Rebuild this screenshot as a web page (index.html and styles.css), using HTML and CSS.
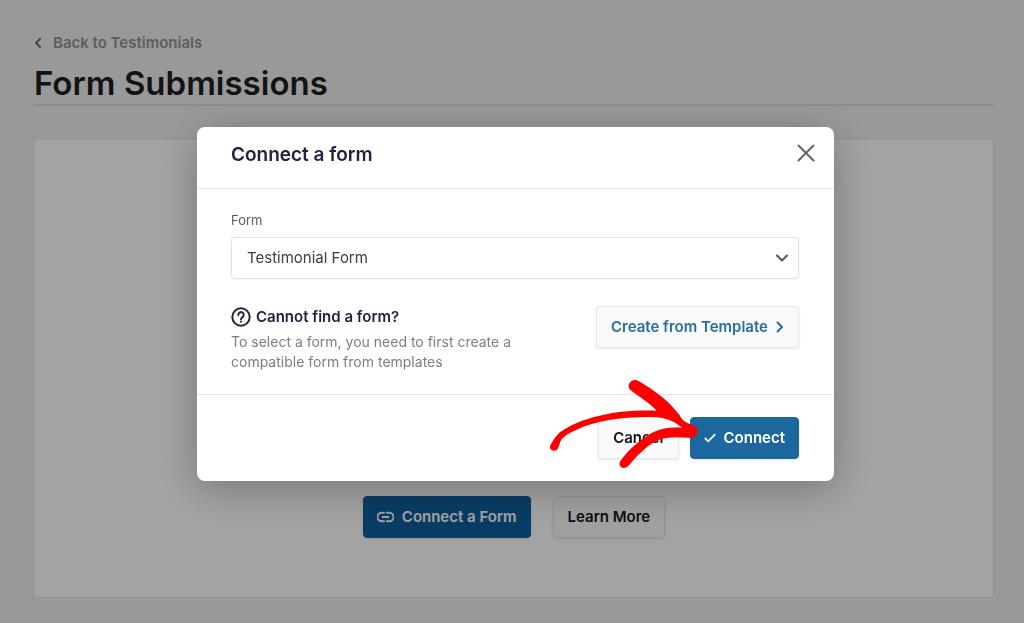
FILE: index.html
```html
<!DOCTYPE html>
<html lang="en">
<head>
<meta charset="utf-8">
<meta name="viewport" content="width=device-width, initial-scale=1">
<title>Form Submissions</title>
<link rel="stylesheet" href="styles.css">
</head>
<body>
<main class="page">
  <header class="page-header">
    <a class="back-link" href="#">
      <svg class="back-icon" viewBox="0 0 8 12" aria-hidden="true"><path d="M6 2 2 6l4 4"/></svg>
      Back to Testimonials
    </a>
    <h1 class="page-title">Form Submissions</h1>
  </header>
  <section class="card">
    <button class="btn btn-primary btn-muted" type="button">
      <svg class="link-icon" viewBox="0 0 18 12" aria-hidden="true"><path d="M7.500 1.500H5a4.500 4.500 0 0 0 0 9h2.500M10.500 1.500H13a4.500 4.500 0 0 1 0 9h-2.500M6 6h6"/></svg>
      Connect a Form
    </button>
    <button class="btn" type="button">Learn More</button>
  </section>
</main>

<div class="overlay">
  <div class="modal" role="dialog" aria-modal="true" aria-labelledby="modal-title">
    <header class="modal-header">
      <h2 class="modal-title" id="modal-title">Connect a form</h2>
      <button class="close" type="button" aria-label="Close">
        <svg class="close-icon" viewBox="0 0 18 18" aria-hidden="true"><path d="m1.500 1.500 15 15M16.500 1.500l-15 15"/></svg>
      </button>
    </header>
    <div class="modal-body">
      <label class="label" for="form-select">Form</label>
      <div class="select-wrap">
        <select class="select" id="form-select"><option>Testimonial Form</option></select>
        <svg class="chevron" viewBox="0 0 12 8" aria-hidden="true"><path d="m1 1.500 5 5 5-5"/></svg>
      </div>
      <div class="help">
        <div class="help-copy">
          <h3 class="help-title">
            <svg class="help-icon" viewBox="0 0 20 20" aria-hidden="true"><circle cx="10" cy="10" r="8.700"/><path d="M7.300 7.900a2.700 2.700 0 1 1 4.200 2.200c-1 .7-1.500 1.100-1.500 2.200"/><path d="M10 14.600v.2"/></svg>
            Cannot find a form?
          </h3>
          <p class="help-text">To select a form, you need to first create a compatible form from templates</p>
        </div>
        <button class="btn btn-link" type="button">
          Create from Template
          <svg class="next-icon" viewBox="0 0 8 12" aria-hidden="true"><path d="m1.500 1.500 4.500 4.500-4.500 4.500"/></svg>
        </button>
      </div>
    </div>
    <footer class="modal-footer">
      <button class="btn" type="button">Cancel</button>
      <button class="btn btn-primary" type="button">
        <svg class="check-icon" viewBox="0 0 14 12" aria-hidden="true"><path d="m1.500 6.500 3.500 3.500 7.500-8"/></svg>
        Connect
      </button>
      <svg class="arrow" viewBox="0 0 510 330" aria-hidden="true">
        <path d="M31 226C42 205 52 193 62 185C130 140 230 118 350 122C325 97 300 82 272 61C256 46 275 22 296 33C345 62 385 92 414 130C422 137 421 142 426 147C440 162 456 163 468 171C480 185 470 202 454 204C420 202 385 197 350 212C314 231 288 261 264 289C249 302 232 287 241 274C265 238 299 211 335 189C365 174 395 172 426 173C407 157 387 146 350 142C270 138 175 148 110 179C82 191 65 203 62 214L54 235C46 250 24 240 31 226Z"/>
      </svg>
    </footer>
  </div>
</div>
</body>
</html>
```
FILE: styles.css
```css
* { box-sizing: border-box; }

body {
  margin: 0;
  background: #f0f0f1;
  color: #1d1f21;
  font-family: Inter, "Liberation Sans", sans-serif;
}

h1, h2, h3, p { margin: 0; }

svg {
  flex: none;
  fill: none;
  stroke: currentColor;
  stroke-width: 2;
  stroke-linecap: round;
  stroke-linejoin: round;
}

.page {
  display: flex;
  flex-direction: column;
  gap: 33px;
  min-height: 100vh;
  padding: 32px 30px 25px 34px;
}

.page-header { border-bottom: 2px solid #dcdcde; }

.back-link {
  display: flex;
  align-items: center;
  gap: 11px;
  color: #929297;
  font-size: 15px;
  font-weight: 600;
  line-height: 22px;
  text-decoration: none;
}

.back-icon {
  width: 8px;
  height: 12px;
  color: #6c6c70;
}

.page-title {
  padding: 9px 0 0;
  font-size: 33px;
  font-weight: 600;
  line-height: 41px;
}

.card {
  display: flex;
  flex: 1;
  align-items: flex-end;
  justify-content: center;
  gap: 22px;
  padding-bottom: 59px;
  border: 1px solid #e8e8ea;
  background: #fff;
}

.btn {
  display: flex;
  flex: none;
  align-items: center;
  gap: 8px;
  height: 42px;
  padding: 0 14px;
  border: 1px solid #e8e8ea;
  border-radius: 4px;
  background: #fafafa;
  box-shadow: 0 1px 3px rgba(0, 0, 0, 0.1);
  color: #14161a;
  font: 600 15px/20px Inter, "Liberation Sans", sans-serif;
  white-space: nowrap;
}

.btn-primary {
  padding: 0 13px;
  border-color: #1d679f;
  background: #1d679f;
  color: #fff;
}

.btn-muted { border-color: #0e5f9d; background: #0e5f9d; }
.btn-link { color: #286ea6; }

.link-icon {
  width: 17px;
  height: 12px;
  stroke-width: 2;
}

.check-icon { width: 12px; height: 12px; }
.next-icon { width: 8px; height: 12px; }

.overlay {
  position: fixed;
  inset: 0;
  display: flex;
  align-items: flex-start;
  justify-content: center;
  padding: 127px 24px 24px 31px;
  overflow: auto;
  background: rgba(0, 0, 0, 0.36);
}

.modal {
  width: 100%;
  max-width: 637px;
  border-radius: 8px;
  background: #fff;
  box-shadow: 0 8px 40px rgba(0, 0, 0, 0.28);
}

.modal-header {
  display: flex;
  align-items: flex-start;
  justify-content: space-between;
  padding: 12px 16px 18px 34px;
  border-bottom: 1px solid #e6e6e8;
}

.modal-title {
  color: #23233f;
  font-size: 19px;
  font-weight: 600;
  line-height: 31px;
}

.close {
  display: flex;
  padding: 5px 3px;
  border: 0;
  background: none;
  color: #64646e;
}

.close-icon { width: 18px; height: 18px; }

.modal-body { padding: 21px 35px 22px 34px; }

.label {
  display: block;
  margin-bottom: 7px;
  color: #5a5c68;
  font-size: 13px;
  line-height: 20px;
}

.select-wrap {
  display: grid;
  align-items: center;
}

.select {
  grid-area: 1 / 1;
  width: 100%;
  height: 42px;
  padding: 0 40px 0 15px;
  appearance: none;
  border: 1px solid #e4e4e6;
  border-radius: 4px;
  background: #fff;
  box-shadow: 0 0 2px rgba(0, 0, 0, 0.1);
  color: #3c3d42;
  font: 400 15px/20px Inter, "Liberation Sans", sans-serif;
}

.chevron {
  grid-area: 1 / 1;
  justify-self: end;
  width: 12px;
  height: 8px;
  margin-right: 11px;
  color: #55565c;
  pointer-events: none;
}

.help {
  display: flex;
  align-items: flex-start;
  justify-content: space-between;
  gap: 24px;
  padding-top: 27px;
}

.help-copy { max-width: 310px; }

.help-title {
  display: flex;
  align-items: center;
  gap: 5px;
  margin-bottom: 4px;
  color: #23233f;
  font-size: 15px;
  font-weight: 600;
  line-height: 22px;
}

.help-icon { width: 20px; height: 20px; }

.help-text {
  color: #7c7e88;
  font-size: 14px;
  line-height: 20px;
}

.modal-footer {
  position: relative;
  display: flex;
  justify-content: flex-end;
  gap: 11px;
  padding: 22px 35px 22px 34px;
  border-top: 1px solid #e6e6e8;
}

.arrow {
  position: absolute;
  right: 124px;
  bottom: 1px;
  width: 170px;
  height: 110px;
  fill: #fe0000;
  stroke: none;
  pointer-events: none;
}
```
